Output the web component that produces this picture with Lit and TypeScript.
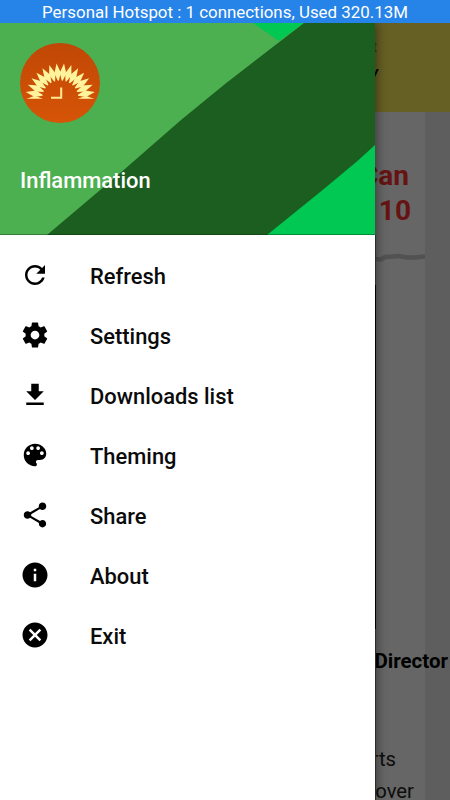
import { LitElement, html, css, svg } from "lit";
import { customElement } from "lit/decorators.js";

const ITEMS: { label: string; path: string }[] = [
  { label: "Refresh", path: "M17.65 6.35C16.2 4.9 14.21 4 12 4c-4.42 0-7.99 3.58-7.99 8s3.57 8 7.99 8c3.73 0 6.84-2.55 7.73-6h-2.08c-.82 2.33-3.04 4-5.65 4-3.31 0-6-2.69-6-6s2.69-6 6-6c1.66 0 3.14.69 4.22 1.78L13 11h7V4l-2.35 2.35z" },
  { label: "Settings", path: "M19.43 12.98c.04-.32.07-.64.07-.98s-.03-.66-.07-.98l2.11-1.65c.19-.15.24-.42.12-.64l-2-3.46c-.12-.22-.39-.3-.61-.22l-2.49 1c-.52-.4-1.08-.73-1.69-.98l-.38-2.65C14.46 2.18 14.25 2 14 2h-4c-.25 0-.46.18-.49.42l-.38 2.65c-.61.25-1.17.59-1.69.98l-2.49-1c-.23-.09-.49 0-.61.22l-2 3.46c-.13.22-.07.49.12.64l2.11 1.65c-.04.32-.07.65-.07.98s.03.66.07.98l-2.11 1.65c-.19.15-.24.42-.12.64l2 3.46c.12.22.39.3.61.22l2.49-1c.52.4 1.08.73 1.69.98l.38 2.65c.03.24.24.42.49.42h4c.25 0 .46-.18.49-.42l.38-2.65c.61-.25 1.17-.59 1.69-.98l2.49 1c.23.09.49 0 .61-.22l2-3.46c.12-.22.07-.49-.12-.64l-2.11-1.65zM12 15.5c-1.93 0-3.5-1.57-3.5-3.5s1.57-3.5 3.5-3.5 3.5 1.57 3.5 3.5-1.57 3.5-3.5 3.5z" },
  { label: "Downloads list", path: "M19 9h-4V3H9v6H5l7 7 7-7zM5 18v2h14v-2H5z" },
  { label: "Theming", path: "M12 3c-4.97 0-9 4.03-9 9s4.03 9 9 9c.83 0 1.5-.67 1.5-1.5 0-.39-.15-.74-.39-1.01-.23-.26-.38-.61-.38-.99 0-.83.67-1.5 1.5-1.5H16c2.76 0 5-2.24 5-5 0-4.42-4.03-8-9-8zm-5.5 9c-.83 0-1.5-.67-1.5-1.5S5.67 9 6.5 9 8 9.67 8 10.5 7.33 12 6.5 12zm3-4C8.67 8 8 7.33 8 6.5S8.67 5 9.5 5s1.5.67 1.5 1.5S10.33 8 9.5 8zm5 0c-.83 0-1.5-.67-1.5-1.5S13.67 5 14.5 5s1.5.67 1.5 1.5S15.33 8 14.5 8zm3 4c-.83 0-1.5-.67-1.5-1.5S16.67 9 17.5 9s1.5.67 1.5 1.5-.67 1.5-1.5 1.5z" },
  { label: "Share", path: "M18 16.08c-.76 0-1.44.3-1.96.77L8.91 12.7c.05-.23.09-.46.09-.7s-.04-.47-.09-.7l7.05-4.11c.54.5 1.25.81 2.04.81 1.66 0 3-1.34 3-3s-1.34-3-3-3-3 1.34-3 3c0 .24.04.47.09.7L8.04 9.81C7.5 9.31 6.79 9 6 9c-1.66 0-3 1.34-3 3s1.34 3 3 3c.79 0 1.5-.31 2.04-.81l7.12 4.16c-.05.21-.08.43-.08.65 0 1.61 1.31 2.92 2.92 2.92s2.92-1.31 2.92-2.92-1.31-2.92-2.92-2.92z" },
  { label: "About", path: "M12 2C6.48 2 2 6.48 2 12s4.48 10 10 10 10-4.48 10-10S17.52 2 12 2zm1 15h-2v-6h2v6zm0-8h-2V7h2v2z" },
  { label: "Exit", path: "M12 2C6.47 2 2 6.47 2 12s4.47 10 10 10 10-4.47 10-10S17.53 2 12 2zm5 13.59L15.59 17 12 13.41 8.41 17 7 15.59 10.59 12 7 8.41 8.41 7 12 10.59 15.59 7 17 8.41 13.41 12 17 15.59z" },
];

const PETALS = 16;
const PETAL_STEP = 12.2;

@customElement("app-logo")
class AppLogo extends LitElement {
  static styles = css`
    :host { display: block; width: 80px; height: 80px; }
    svg { display: block; }
  `;
  render() {
    const petals = Array.from({ length: PETALS }, (_, i) => {
      const a = (i - (PETALS - 1) / 2) * PETAL_STEP;
      return svg`<path transform="rotate(${a} 40.3 55.5)" d="M39.8 37.500L37 30L40.3 20.300L43.6 30L40.8 37.500Z"/>`;
    });
    return html`<svg width="80" height="80" viewBox="0 0 80 80">
      <defs>
        <linearGradient id="g" x1="0" y1="0" x2="0" y2="1"><stop offset="0" stop-color="#c04705"/><stop offset="1" stop-color="#d65507"/></linearGradient>
        <clipPath id="c"><rect width="80" height="55.8"/></clipPath>
      </defs>
      <circle cx="40" cy="40" r="40" fill="url(#g)"/>
      <g fill="#fff39c" clip-path="url(#c)">${petals}</g>
      <path d="M41.2 44.500V54.700H31" fill="none" stroke="#ffe993" stroke-width="2"/>
    </svg>`;
  }
}

@customElement("app-root")
class AppRoot extends LitElement {
  static styles = css`
    :host { display: flex; flex-direction: column; position: relative; width: 450px; height: 800px; overflow: hidden; background: #5e5e5e; font-family: Roboto, sans-serif; }
    .status { position: relative; z-index: 2; height: 23px; background: #2683e8; color: #fff; font-size: 16.9px; line-height: 25px; text-align: center; white-space: nowrap; flex: none; overflow: hidden; }
    .page { flex: 1; min-height: 0; display: flex; flex-direction: column; }
    .toolbar { height: 89px; flex: none; background: #666025; box-sizing: border-box; padding: 16px 72px 0 0; display: flex; flex-direction: column; align-items: flex-end; font-size: 14px; }
    .line1 { line-height: 16px; color: #38350f; margin-right: 1px; }
    .line2 { line-height: 16px; margin-top: 9px; color: #000; font-weight: 700; font-style: italic; }
    .article { width: 425px; flex: 1; background: #666; box-sizing: border-box; padding-top: 46px; display: flex; flex-direction: column; align-items: flex-end; white-space: nowrap; }
    .title { color: #661313; font-weight: 700; font-size: 28px; line-height: 35px; margin-right: 14px; display: flex; flex-direction: column; align-items: flex-end; }
    .first { margin-right: 2px; }
    .torn { display: block; margin-top: 22px; filter: blur(.6px); }
    .director { margin: 387px -23px 0 0; font-size: 20.5px; line-height: 24px; font-weight: 700; color: #000; }
    .body { margin: 74px 11px 0 0; font-size: 20.3px; color: #0d0d0d; display: flex; flex-direction: column; align-items: flex-end; }
    .body span { line-height: 25px; }
    .body span:first-child { margin: 0 18px 7px 0; }
    .drawer { position: absolute; left: 0; top: 23px; width: 375px; height: 777px; background: #fff; box-shadow: 2px 0 10px rgba(0,0,0,.42); }
    .edge { position: absolute; left: 375px; top: 212px; width: 1px; height: 565px; background: linear-gradient(#2c2c2c 50px, #000 50px, #000 394px, #2c2c2c 394px); }
    .head { height: 212px; position: relative; box-sizing: border-box; padding: 20px; display: flex; flex-direction: column; justify-content: space-between; }
    .art { position: absolute; inset: 0; }
    app-logo { position: relative; }
    .name { position: relative; color: #fff; font-size: 21.9px; line-height: 26px; font-weight: 500; margin-bottom: 21px; }
    nav { padding-top: 10px; }
    .item { height: 60px; display: flex; align-items: center; padding-left: 20px; gap: 40px; font-size: 21.9px; font-weight: 500; color: #0b0b0b; }
    .item svg { fill: #000; width: 30px; height: 30px; }
    .label { padding-top: 2px; }
  `;
  render() {
    return html`
      <div class="status">Personal Hotspot : 1 connections, Used 320.13M</div>
      <div class="page">
        <div class="toolbar"><div class="line1">t</div><div class="line2">y</div></div>
        <div class="article">
          <div class="title"><span class="first">Can</span><span>10</span></div>
          <svg class="torn" width="60" height="12" viewBox="0 0 60 12"><path d="M0 8L9 9L16 9.500L20 7L28 6.500L34 6L42 7.500L50 7.500L60 6.500" fill="none" stroke="#525252" stroke-width="4.500"/></svg>
          <div class="director">Director</div>
          <div class="body"><span>rts</span><span>over</span></div>
        </div>
      </div>
      <div class="drawer">
        <div class="edge"></div>
        <div class="head">
          <svg class="art" width="375" height="212" viewBox="0 0 375 212">
            <rect width="375" height="212" fill="#4caf50"/>
            <path d="M253 0H304L279 18Z" fill="#00c853"/>
            <path d="M304 0H375V212H47L122 148.500L181 97L225 61Z" fill="#1b5e20"/>
            <path d="M375 122V212H267L322 167.500L358 137.500Z" fill="#00c853"/>
            <path d="M0 211.500H375" stroke="#002000" stroke-opacity=".35"/>
          </svg>
          <app-logo></app-logo>
          <div class="name">Inflammation</div>
        </div>
        <nav>
          ${ITEMS.map((i) => html`<div class="item"><svg viewBox="0 0 24 24"><path d=${i.path}/></svg><span class="label">${i.label}</span></div>`)}
        </nav>
      </div>
    `;
  }
}
